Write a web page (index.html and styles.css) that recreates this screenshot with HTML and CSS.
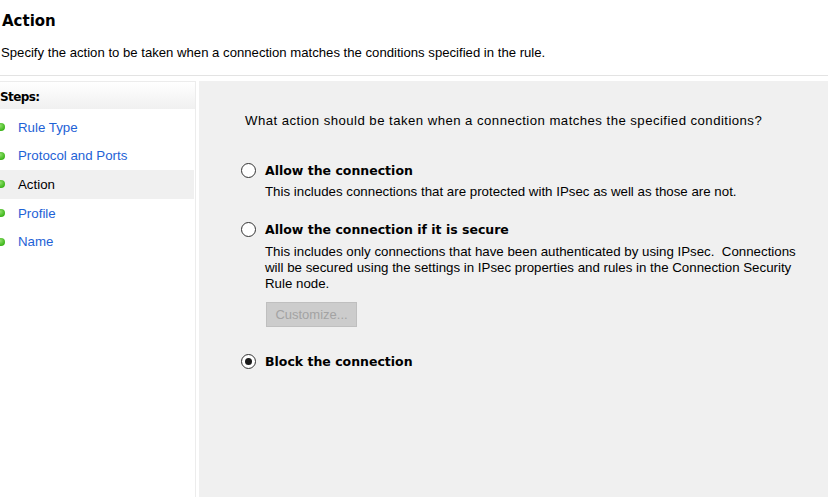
FILE: index.html
```html
<!DOCTYPE html>
<html>
<head>
<meta charset="utf-8">
<link rel="stylesheet" href="styles.css">
</head>
<body>
<div class="page">
  <header class="head">
    <h1 class="title">Action</h1>
    <p class="subtitle">Specify the action to be taken when a connection matches the conditions specified in the rule.</p>
  </header>
  <div class="body">
    <aside class="steps">
      <div class="steps-head">Steps:</div>
      <ul class="step-list">
        <li class="step"><span class="dot"></span><span class="link">Rule Type</span></li>
        <li class="step"><span class="dot"></span><span class="link">Protocol and Ports</span></li>
        <li class="step current"><span class="dot"></span><span>Action</span></li>
        <li class="step"><span class="dot"></span><span class="link">Profile</span></li>
        <li class="step"><span class="dot"></span><span class="link">Name</span></li>
      </ul>
    </aside>
    <main class="content">
      <p class="question">What action should be taken when a connection matches the specified conditions?</p>
      <div class="option opt1">
        <div class="opt-row"><span class="radio"></span><span class="opt-label">Allow the connection</span></div>
        <p class="desc">This includes connections that are protected with IPsec as well as those are not.</p>
      </div>
      <div class="option opt2">
        <div class="opt-row"><span class="radio"></span><span class="opt-label">Allow the connection if it is secure</span></div>
        <p class="desc">This includes only connections that have been authenticated by using IPsec.&nbsp; Connections will be secured using the settings in IPsec properties and rules in the Connection Security Rule node.</p>
        <button class="btn" disabled>Customize...</button>
      </div>
      <div class="option opt3">
        <div class="opt-row"><span class="radio checked"></span><span class="opt-label">Block the connection</span></div>
      </div>
    </main>
  </div>
</div>
</body>
</html>
```
FILE: styles.css
```css
html, body {
  margin: 0;
  padding: 0;
  background: #ffffff;
  height: 100%;
  overflow: hidden;
}
body {
  font-family: "Liberation Sans", Arial, sans-serif;
  font-size: 13.2px;
  color: #000;
}
.page {
  display: flex;
  flex-direction: column;
  height: 497px;
}
.head {
  height: 76px;
  border-bottom: 1px solid #e3e3e3;
  box-sizing: border-box;
  padding-left: 2px;
}
.title {
  margin: 0;
  padding-top: 11px;
  font-family: "DejaVu Sans", sans-serif;
  font-size: 15px;
  font-weight: bold;
  line-height: 20px;
}
.subtitle {
  margin: 14px 0 0 -1px;
  line-height: 16px;
  font-size: 13.15px;
}
.body {
  flex: 1;
  display: flex;
  padding-top: 5px;
  gap: 3px;
}
.steps {
  width: 199px;
  margin-left: -3px;
  border: 1px solid #ececec;
  border-bottom: none;
  box-sizing: border-box;
}
.steps-head {
  height: 27px;
  line-height: 30px;
  padding-left: 2px;
  font-family: "DejaVu Sans", sans-serif;
  font-weight: bold;
  font-size: 12px;
  letter-spacing: -0.6px;
  background: linear-gradient(#ffffff, #f0f0f0);
}
.step-list {
  list-style: none;
  margin: 4px 0 0 0;
  padding: 0;
}
.step {
  height: 28.6px;
  display: flex;
  align-items: center;
  font-size: 13.3px;
  margin-right: 1px;
}
.step.current {
  background: #f0f0f0;
}
.dot {
  width: 8px;
  height: 8px;
  border-radius: 50%;
  background: radial-gradient(circle at 40% 35%, #8fe06a, #3cb41a 70%);
  margin-left: -1px;
  margin-right: 13px;
}
.link {
  color: #1e62d6;
}
.content {
  flex: 1;
  background: #f0f0f0;
  padding: 32px 0 0 42px;
}
.question {
  margin: 0 0 0 4px;
  line-height: 16px;
  letter-spacing: 0.45px;
}
.opt1 { margin-top: 32px; }
.opt2 { margin-top: 20px; }
.opt3 { margin-top: 25px; }
.opt-row {
  display: flex;
  align-items: center;
  height: 18px;
}
.radio {
  width: 13px;
  height: 13px;
  border: 1px solid #333333;
  border-radius: 50%;
  background: #fff;
  box-sizing: content-box;
  position: relative;
  margin-right: 9px;
}
.radio.checked::after {
  content: "";
  position: absolute;
  left: 3px;
  top: 3px;
  width: 7px;
  height: 7px;
  border-radius: 50%;
  background: #1a1a1a;
}
.opt-label {
  font-family: "DejaVu Sans", sans-serif;
  font-weight: bold;
  font-size: 12.5px;
}
.desc {
  margin: 5px 0 0 24px;
  line-height: 16px;
  font-size: 13.3px;
  max-width: 540px;
}
.opt2 .desc {
  margin-top: 6px;
}
.btn {
  display: block;
  margin: 10px 0 0 25px;
  width: 91px;
  height: 25px;
  background: #cccccc;
  border: 1px solid #bfbfbf;
  color: #a3a3a3;
  font-family: "Liberation Sans", Arial, sans-serif;
  font-size: 13px;
  padding: 0;
}
```
